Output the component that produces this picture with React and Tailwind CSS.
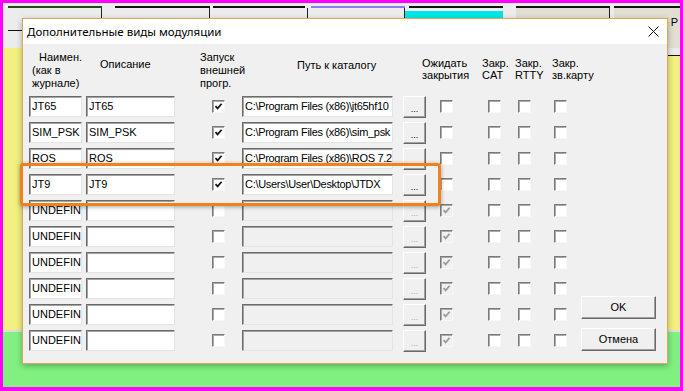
import React from "react";

const rows = [
  { name: "JT65", desc: "JT65", run: true, path: "C:\\Program Files (x86)\\jt65hf10", active: true },
  { name: "SIM_PSK", desc: "SIM_PSK", run: true, path: "C:\\Program Files (x86)\\sim_psk", active: true },
  { name: "ROS", desc: "ROS", run: true, path: "C:\\Program Files (x86)\\ROS 7.2", active: true },
  { name: "JT9", desc: "JT9", run: true, path: "C:\\Users\\User\\Desktop\\JTDX", active: true },
  { name: "UNDEFIN", desc: "", run: false, path: "", active: false },
  { name: "UNDEFIN", desc: "", run: false, path: "", active: false },
  { name: "UNDEFIN", desc: "", run: false, path: "", active: false },
  { name: "UNDEFIN", desc: "", run: false, path: "", active: false },
  { name: "UNDEFIN", desc: "", run: false, path: "", active: false },
  { name: "UNDEFIN", desc: "", run: false, path: "", active: false },
];

function Check({ checked, disabled }) {
  return (
    <div
      className={`w-[13px] h-[13px] shrink-0 border border-t-[#7a7a7a] border-l-[#7a7a7a] border-b-[#f7f7f7] border-r-[#f7f7f7] shadow-[inset_1px_1px_0_#a9a9a9] flex items-center justify-center ${
        disabled ? "bg-[#f0f0f0]" : "bg-white"
      }`}
    >
      {checked && (
        <svg width="9" height="9" viewBox="0 0 9 9">
          <path
            d="M1.5 4.2 L3.6 6.4 L7.6 1.8"
            fill="none"
            stroke={disabled ? "#9a9a9a" : "#111"}
            strokeWidth="1.7"
          />
        </svg>
      )}
    </div>
  );
}

function Field({ value, width, disabled, tight }) {
  return (
    <div
      className={`h-[21px] shrink-0 overflow-hidden whitespace-nowrap border border-t-[#6b6b6b] border-l-[#6b6b6b] border-b-[#e4e4e4] border-r-[#e4e4e4] shadow-[inset_1px_1px_0_#a3a3a3] pl-[2px] text-[11px] leading-[19px] text-black ${
        disabled ? "bg-[#f0f0f0]" : "bg-white"
      } ${tight ? "tracking-[-0.3px]" : ""} ${width}`}
    >
      {value}
    </div>
  );
}

function Dots({ disabled }) {
  return (
    <div
      className={`ml-[10px] w-[23px] h-[22px] shrink-0 bg-[#f0f0f0] border border-t-white border-l-white border-b-[#696969] border-r-[#696969] shadow-[inset_-1px_-1px_0_#a0a0a0] flex items-end justify-center pb-[3px] text-[9px] leading-none ${
        disabled ? "text-[#a8a8a8]" : "text-black"
      }`}
    >
      ...
    </div>
  );
}

function WinButton({ children }) {
  return (
    <div className="w-[75px] h-[23px] bg-[#f0f0f0] border border-t-white border-l-white border-b-[#696969] border-r-[#696969] shadow-[inset_-1px_-1px_0_#a0a0a0] flex items-center justify-center text-[11px] text-black">
      {children}
    </div>
  );
}

export default function App() {
  return (
    <div
      className="relative w-[683px] h-[391px] bg-[#ff00ff] pt-[3px] px-[3px] pb-[4px] overflow-hidden"
      style={{ fontFamily: '"Liberation Sans", Arial, sans-serif' }}
    >
      {/* main window behind the dialog */}
      <div className="h-full flex flex-col bg-[#ececec]">
        <div className="h-[5px] flex">
          <div className="ml-[5px] w-[94px] border-b-2 border-[#1f4a1f]" />
          <div className="ml-[13px] w-[95px] border-b-2 border-[#111]" />
          <div className="ml-[3px] w-[92px] border-b-2 border-[#111]" />
          <div className="ml-[6px] w-[94px] border-b-2 border-[#8a7cf0]" />
          <div className="ml-[4px] w-[94px] border-b-2 border-[#111]" />
          <div className="ml-[13px] w-[94px] border-b-2 border-[#111]" />
          <div className="ml-[4px] flex-1 border-b-2 border-[#111]" />
        </div>
        <div className="h-[40px] flex text-[11px]">
          <div className="w-[99px] border-r border-[#222] flex flex-col">
            <div className="h-[22px]" />
            <div className="ml-[5px] border-t border-[#111]" />
          </div>
          <div className="w-[108px] border-r border-[#222]" />
          <div className="w-[98px] border-r border-[#222]" />
          <div className="w-[97px] border-r border-[#222]" />
          <div className="w-[98px] bg-[#00e6e6] mt-[3px] flex justify-center pt-[6px]">PLAY</div>
          <div className="ml-[13px] w-[94px] bg-[#e2ded2] border-r border-[#222] flex justify-center pt-[6px]">7SDZ</div>
          <div className="ml-[4px] flex-1 bg-[#e2ded2] flex justify-end pr-[2px] pt-[6px]">P</div>
        </div>
        <div className="flex-1 flex bg-[#f3ef80]">
          <div className="w-[19px]" />
          <div className="flex-1" />
          <div className="w-[13px] flex flex-col">
            <div className="h-[8px] bg-[#ececec] border-b border-[#111]" />
          </div>
        </div>
        <div className="h-[57px] bg-[#80f080] border-t-2 border-[#dedede]" />
      </div>

      {/* dialog */}
      <div className="absolute left-[22px] top-[18px] w-[646px] h-[346px] bg-[#f0f0f0] border border-[#d9aa55] shadow-[0_2px_6px_rgba(0,0,0,0.3)] flex flex-col">
        <div className="h-[25px] bg-white flex items-center justify-between pl-[4px] pr-[8px]">
          <span className="text-[11.5px] text-black" style={{ fontFamily: '"Noto Sans", "Liberation Sans", sans-serif' }}>
            Дополнительные виды модуляции
          </span>
          <svg width="11" height="11" viewBox="0 0 11 11">
            <path d="M0.5 0.5 L10.5 10.5 M10.5 0.5 L0.5 10.5" stroke="#111" strokeWidth="1" />
          </svg>
        </div>

        <div className="flex-1 flex pl-[6px] pt-[7px]">
          <div className="w-[538px] shrink-0 flex flex-col">
            <div className="flex pl-[3px] h-[39px] text-[11px] leading-[13px] text-black">
              <div className="w-[68px] shrink-0">
                <div className="pl-[7px]">Наимен.</div>
                <div>(как в</div>
                <div>журнале)</div>
              </div>
              <div className="w-[100px] shrink-0 pt-[7px]">Описание</div>
              <div className="w-[97px] shrink-0">
                <div>Запуск</div>
                <div>внешней</div>
                <div>прогр.</div>
              </div>
              <div className="w-[125px] shrink-0 pt-[8px]">Путь к каталогу</div>
              <div className="w-[60px] shrink-0 pt-[6px] leading-[12px]">
                <div>Ожидать</div>
                <div>закрытия</div>
              </div>
              <div className="w-[33px] shrink-0 pt-[6px] leading-[12px]">
                <div>Закр.</div>
                <div>CAT</div>
              </div>
              <div className="w-[37px] shrink-0 pt-[6px] leading-[12px]">
                <div>Закр.</div>
                <div>RTTY</div>
              </div>
              <div className="w-[15px] shrink-0 pt-[6px] leading-[12px] whitespace-nowrap">
                <div>Закр.</div>
                <div>зв.карту</div>
              </div>
            </div>

            <div className="mt-[6px] flex flex-col gap-[5px]">
              {rows.map((r, i) => (
                <div key={i} className="flex items-center h-[21px]">
                  <Field value={r.name} width="w-[53px]" />
                  <div className="ml-[4px]">
                    <Field value={r.desc} width="w-[89px]" />
                  </div>
                  <div className="ml-[37px]">
                    <Check checked={r.run} />
                  </div>
                  <div className="ml-[17px]">
                    <Field value={r.path} width="w-[151px]" disabled={!r.active} tight />
                  </div>
                  <Dots disabled={!r.active} />
                  <div className="ml-[14px]">
                    <Check checked={!r.active} disabled={!r.active} />
                  </div>
                  <div className="ml-[35px]">
                    <Check />
                  </div>
                  <div className="ml-[17px]">
                    <Check />
                  </div>
                  <div className="ml-[23px]">
                    <Check />
                  </div>
                </div>
              ))}
            </div>
          </div>

          <div className="ml-[14px] self-end mb-[12px] flex flex-col gap-[9px]">
            <WinButton>OK</WinButton>
            <WinButton>Отмена</WinButton>
          </div>
        </div>
      </div>

      {/* highlight annotation */}
      <div className="absolute left-[20px] top-[163px] w-[421px] h-[43px] border-[3px] border-[#f0821e] rounded-[3px] shadow-[0_1px_4px_rgba(0,0,0,0.35)]" />
    </div>
  );
}
